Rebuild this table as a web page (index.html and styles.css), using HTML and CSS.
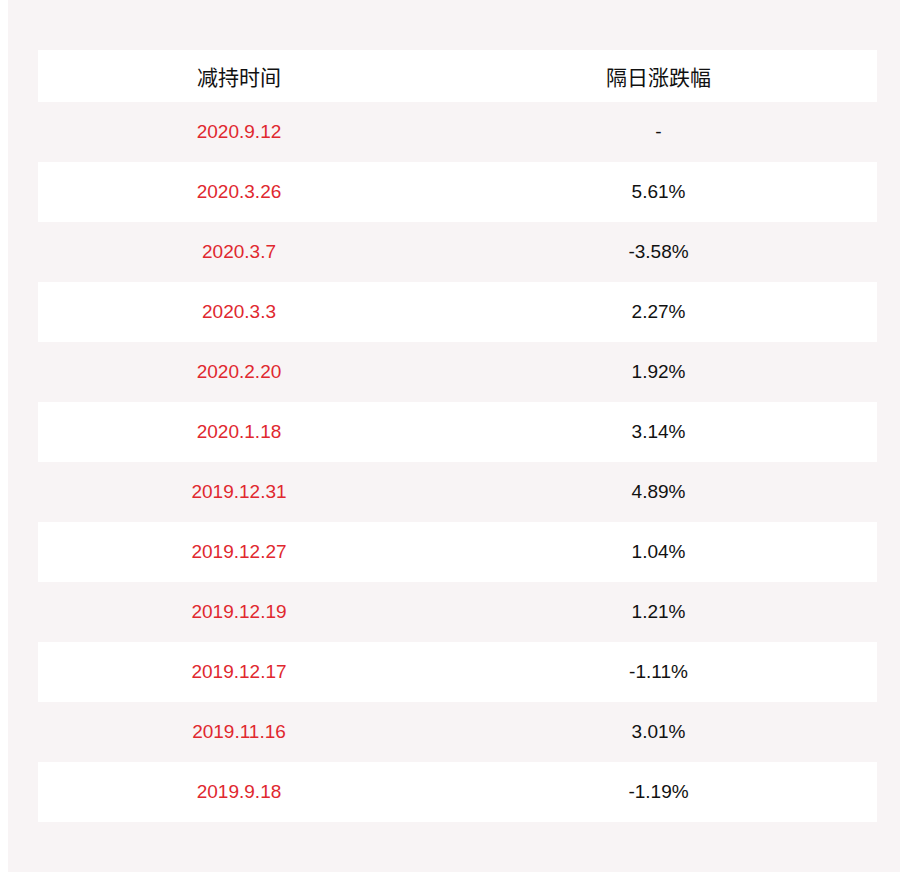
FILE: index.html
```html
<!DOCTYPE html>
<html>
<head>
<meta charset="utf-8">
<link rel="stylesheet" href="styles.css">
</head>
<body>
<div class="panel">
  <table class="data">
    <thead>
      <tr><th class="c1">减持时间</th><th class="c2">隔日涨跌幅</th></tr>
    </thead>
    <tbody>
      <tr><td class="date">2020.9.12</td><td>-</td></tr>
      <tr><td class="date">2020.3.26</td><td>5.61%</td></tr>
      <tr><td class="date">2020.3.7</td><td>-3.58%</td></tr>
      <tr><td class="date">2020.3.3</td><td>2.27%</td></tr>
      <tr><td class="date">2020.2.20</td><td>1.92%</td></tr>
      <tr><td class="date">2020.1.18</td><td>3.14%</td></tr>
      <tr><td class="date">2019.12.31</td><td>4.89%</td></tr>
      <tr><td class="date">2019.12.27</td><td>1.04%</td></tr>
      <tr><td class="date">2019.12.19</td><td>1.21%</td></tr>
      <tr><td class="date">2019.12.17</td><td>-1.11%</td></tr>
      <tr><td class="date">2019.11.16</td><td>3.01%</td></tr>
      <tr><td class="date">2019.9.18</td><td>-1.19%</td></tr>
    </tbody>
  </table>
</div>
</body>
</html>
```
FILE: styles.css
```css
html, body {
  margin: 0;
  padding: 0;
  background: #ffffff;
}
body {
  padding-left: 8px;
  font-family: "Liberation Sans", Arial, "Noto Sans CJK SC", sans-serif;
}
.panel {
  background: #f8f4f5;
  padding: 50px 23px 60px 30px;
  min-height: 872px;
  box-sizing: border-box;
}
.data {
  width: 839px;
  border-collapse: collapse;
  table-layout: fixed;
}
.data th.c1 { width: 402px; }
.data th.c2 { width: 437px; }
.data th {
  height: 52px;
  padding: 0;
  background: #ffffff;
  font-family: "Noto Sans CJK SC", sans-serif;
  font-weight: normal;
  font-size: 21px;
  color: #111111;
  text-align: center;
  vertical-align: middle;
}
.data td {
  height: 60px;
  padding: 0;
  font-size: 19px;
  color: #111111;
  text-align: center;
  vertical-align: middle;
}
.data tbody tr:nth-child(even) td {
  background: #ffffff;
}
.data td.date {
  color: #e0282f;
}
```
